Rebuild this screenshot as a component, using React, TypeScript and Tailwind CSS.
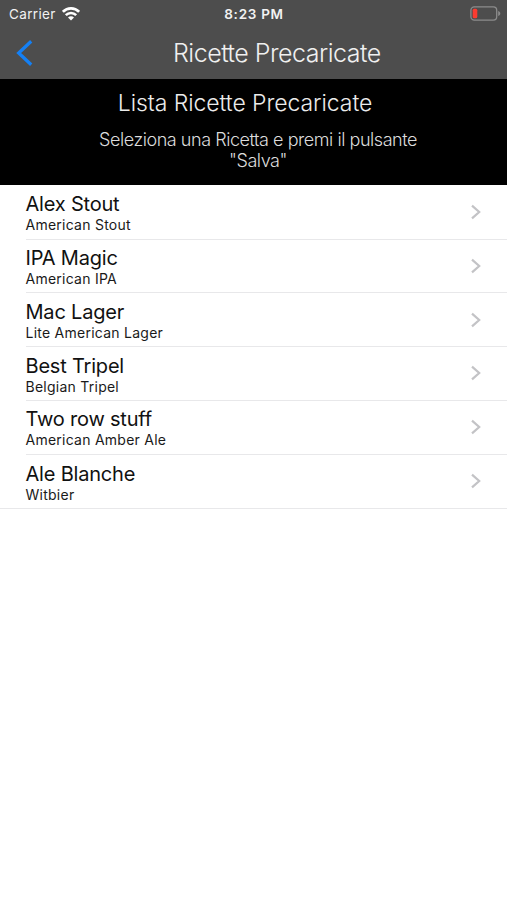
interface Recipe {
  name: string
  style: string
}

const recipes: Recipe[] = [
  { name: "Alex Stout", style: "American Stout" },
  { name: "IPA Magic", style: "American IPA" },
  { name: "Mac Lager", style: "Lite American Lager" },
  { name: "Best Tripel", style: "Belgian Tripel" },
  { name: "Two row stuff", style: "American Amber Ale" },
  { name: "Ale Blanche", style: "Witbier" },
]

const WifiIcon = () => (
  <svg className="w-[18px] h-[14px]" viewBox="0 0 18 14" fill="none" stroke="#fff" strokeWidth="2.6">
    <path d="M0.9 4.8C5.4 0.2 12.6 0.2 17.1 4.8" />
    <path d="M3.8 8.2C6.8 5.2 11.2 5.2 14.2 8.2" />
    <path d="M6 10.4C7.8 8.7 10.2 8.7 12 10.4L9 13.4Z" fill="#fff" stroke="none" />
  </svg>
)

const BatteryIcon = () => (
  <svg className="w-[31px] h-[15px]" viewBox="0 0 31 15" fill="none">
    <rect x="0.9" y="0.9" width="25.8" height="13.2" rx="3.4" stroke="#8c8c8c" strokeWidth="1.3" />
    <rect x="2.7" y="2.7" width="4.6" height="9.6" rx="1.6" fill="#fb3b30" />
    <path d="M28.2 5C31 5.8 31 9.2 28.2 10Z" fill="#8c8c8c" />
  </svg>
)

const StatusBar = () => (
  <div className="grid grid-cols-3 items-center h-[27px] pl-[9px] pr-[6px] text-[13.5px] text-[#f2f2f2]">
    <div className="flex items-center gap-[6px]">
      <span className="pt-[1.5px] tracking-[0.35px]">Carrier</span>
      <WifiIcon />
    </div>
    <div className="pt-[1.5px] pr-[2px] text-center font-semibold tracking-[0.7px]">8:23 PM</div>
    <div className="flex justify-end">
      <BatteryIcon />
    </div>
  </div>
)

const RecipeRow = ({ name, style, last }: Recipe & { last: boolean }) => (
  <li className={last ? "border-b border-[#e8e8ea]" : ""}>
    <div
      className={`flex items-center justify-between h-[53.75px] pr-[26px] ml-[25.5px] ${
        last ? "" : "border-b border-[#e8e8ea]"
      }`}
    >
      <div className="pt-[1.5px]">
        <div className="text-[20px] leading-[24px] tracking-[-0.2px] text-[#111]">{name}</div>
        <div className="text-[14px] leading-[17px] tracking-[0.25px] text-[#1a1a1a]">{style}</div>
      </div>
      <svg className="w-[10px] h-[16px]" viewBox="0 0 10 16" fill="none" stroke="#c3c3c6" strokeWidth="2.2">
        <path d="M1 1.6L8.2 8L1 14.4" />
      </svg>
    </div>
  </li>
)

export default function App() {
  return (
    <div className="h-[900px] bg-white overflow-hidden font-['Inter','Liberation_Sans',sans-serif]">
      <header className="h-[79px] bg-[#4d4d4d]">
        <StatusBar />
        <div className="flex items-center h-[52px] pl-[16px]">
          <button type="button" className="w-[17px]">
            <svg className="w-[17px] h-[26px]" viewBox="0 0 17 26" fill="none" stroke="#1480f5" strokeWidth="3.3">
              <path d="M15.2 1.3L2.7 13L15.2 24.7" />
            </svg>
          </button>
          <h1 className="ml-[140px] pt-[2px] text-[25px] font-light tracking-[-0.5px] text-[#f0f0f0] whitespace-nowrap">
            Ricette Precaricate
          </h1>
        </div>
      </header>

      <section className="h-[106px] bg-black pt-[9px] text-center font-light">
        <h2 className="pr-[17px] text-[23px] leading-[30px] tracking-[-0.07px] text-[#ececec]">
          Lista Ricette Precaricate
        </h2>
        <p className="mt-[10.5px] pl-[9px] text-[18px] leading-[21.5px] tracking-[-0.45px] text-[#dcdcdc]">
          Seleziona una Ricetta e premi il pulsante
          <br />
          "Salva"
        </p>
      </section>

      <ul className="pt-[0.8px]">
        {recipes.map((recipe, index) => (
          <RecipeRow key={recipe.name} {...recipe} last={index === recipes.length - 1} />
        ))}
      </ul>
    </div>
  )
}
